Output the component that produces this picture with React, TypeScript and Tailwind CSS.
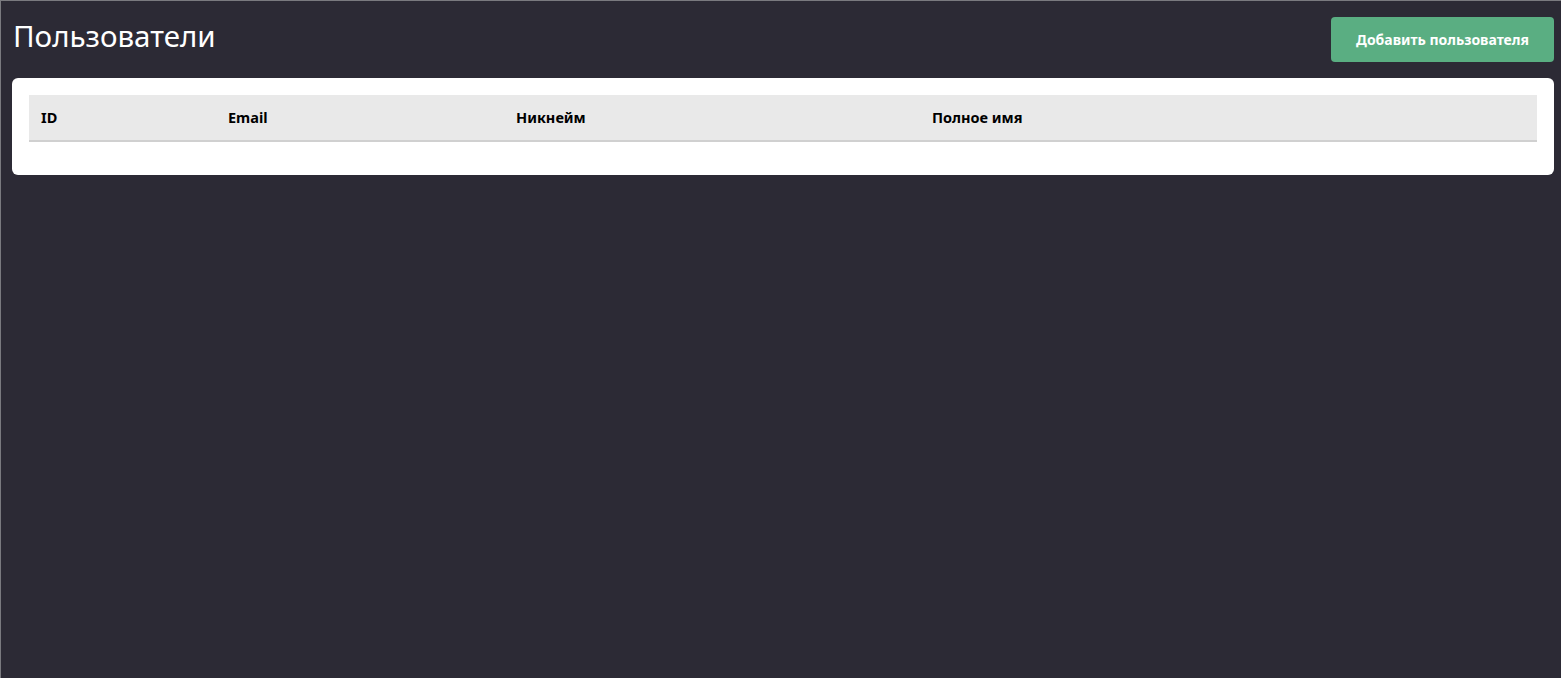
import React from "react";

const columns = [
  { title: "ID", width: "w-[187px]" },
  { title: "Email", width: "w-[288px]" },
  { title: "Никнейм", width: "w-[416px]" },
  { title: "Полное имя", width: "" },
];

export default function App() {
  return (
    <div className="min-h-[678px] bg-[#2c2a35] border-l border-t border-[#7a7a7f] font-['Noto_Sans',sans-serif]">
      <div className="flex items-start justify-between pl-[12px] pr-[7px] pt-[16px]">
        <h1 className="text-[29.5px] font-normal leading-[36px] text-white mt-[1px]">
          Пользователи
        </h1>
        <button className="h-[45px] w-[223px] rounded-[4px] bg-[#5aae82] text-[14px] font-bold text-white">
          Добавить пользователя
        </button>
      </div>
      <div className="ml-[11px] mt-[16px] mr-[7px] rounded-[6px] bg-white px-[17px] pt-[17px] pb-[33px]">
        <table className="w-full border-collapse text-left">
          <thead>
            <tr className="bg-[#e9e9e9] border-b-2 border-[#d0d0d0]">
              {columns.map((c) => (
                <th
                  key={c.title}
                  className={`${c.width} h-[46px] px-[12px] text-[14.5px] font-bold text-black`}
                >
                  {c.title}
                </th>
              ))}
            </tr>
          </thead>
          <tbody></tbody>
        </table>
      </div>
    </div>
  );
}
